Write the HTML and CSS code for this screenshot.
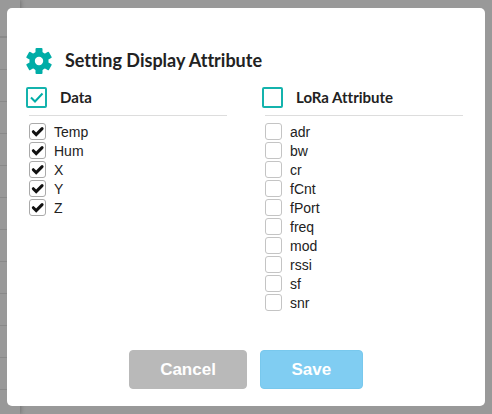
FILE: index.html
```
<!DOCTYPE html>
<html lang="en">
<head>
    <meta charset="UTF-8">
    <meta name="viewport" content="width=device-width, initial-scale=1.0">
    <title>Setting Display Attribute</title>
    <link rel="stylesheet" href="styles.css">
</head>
<body>
    <!-- page behind the dialog -->
    <div class="page">
        <ul class="sidebar">
            <li class="sidebar-head"></li>
            <li></li>
            <li></li>
            <li></li>
            <li></li>
            <li></li>
            <li></li>
            <li></li>
            <li></li>
            <li></li>
            <li></li>
            <li></li>
        </ul>
    </div>

    <div class="overlay">
        <form class="modal" role="dialog" aria-labelledby="modal-title">
            <header class="modal-header">
                <svg class="gear" viewBox="0 0 26 26" aria-hidden="true">
                    <circle cx="13" cy="13" r="9.600"/>
                    <rect x="9.500" y="0" width="7" height="26" rx="1"/>
                    <rect x="9.500" y="0" width="7" height="26" rx="1" transform="rotate(60 13 13)"/>
                    <rect x="9.500" y="0" width="7" height="26" rx="1" transform="rotate(120 13 13)"/>
                    <circle class="gear-hole" cx="13" cy="13" r="4.200"/>
                </svg>
                <h1 id="modal-title">Setting Display Attribute</h1>
            </header>

            <div class="columns">
                <section class="group">
                    <div class="group-head">
                        <input type="checkbox" class="check-all" id="all-data" checked>
                        <label for="all-data">Data</label>
                    </div>
                    <ul class="attributes">
                        <li><input type="checkbox" id="temp" checked><label for="temp">Temp</label></li>
                        <li><input type="checkbox" id="hum" checked><label for="hum">Hum</label></li>
                        <li><input type="checkbox" id="x" checked><label for="x">X</label></li>
                        <li><input type="checkbox" id="y" checked><label for="y">Y</label></li>
                        <li><input type="checkbox" id="z" checked><label for="z">Z</label></li>
                    </ul>
                </section>

                <section class="group">
                    <div class="group-head">
                        <input type="checkbox" class="check-all" id="all-lora">
                        <label for="all-lora">LoRa Attribute</label>
                    </div>
                    <ul class="attributes">
                        <li><input type="checkbox" id="adr"><label for="adr">adr</label></li>
                        <li><input type="checkbox" id="bw"><label for="bw">bw</label></li>
                        <li><input type="checkbox" id="cr"><label for="cr">cr</label></li>
                        <li><input type="checkbox" id="fcnt"><label for="fcnt">fCnt</label></li>
                        <li><input type="checkbox" id="fport"><label for="fport">fPort</label></li>
                        <li><input type="checkbox" id="freq"><label for="freq">freq</label></li>
                        <li><input type="checkbox" id="mod"><label for="mod">mod</label></li>
                        <li><input type="checkbox" id="rssi"><label for="rssi">rssi</label></li>
                        <li><input type="checkbox" id="sf"><label for="sf">sf</label></li>
                        <li><input type="checkbox" id="snr"><label for="snr">snr</label></li>
                    </ul>
                </section>
            </div>

            <footer class="modal-footer">
                <button type="button" class="btn btn-cancel">Cancel</button>
                <button type="button" class="btn btn-save">Save</button>
            </footer>
        </form>
    </div>
</body>
</html>
```
FILE: styles.css
```
* {
    margin: 0;
    padding: 0;
    box-sizing: border-box;
}

body {
    background-color: #999;
    color: #222;
    font-family: "Liberation Sans", Arial, sans-serif;
    font-size: 14px;
}

ul {
    list-style: none;
}

.page {
    height: 100vh;
    overflow: hidden;
}

.sidebar {
    width: 20px;
    min-height: 100%;
    box-shadow: 1px 0 4px rgba(0, 0, 0, 0.25);
}

.sidebar li {
    height: 32px;
    border-bottom: 1px solid #8a8a8a;
}

.sidebar .sidebar-head {
    height: 38px;
    border-bottom-width: 2px;
}

.overlay {
    position: absolute;
    top: 0;
    left: 0;
    width: 100%;
    padding: 8px 7px;
}

.modal {
    padding: 40px 22px 17px;
    background-color: #fff;
    border-radius: 5px;
}

.modal-header {
    display: flex;
    align-items: center;
    gap: 13px;
    height: 26px;
    margin-left: -3px;
}

.gear {
    width: 26px;
    height: 26px;
    fill: #00ada7;
}

.gear-hole {
    fill: #fff;
}

h1 {
    padding-bottom: 2px;
    font-family: Lato, sans-serif;
    font-size: 18px;
    line-height: 24px;
    font-weight: 700;
    font-variant-ligatures: none;
}

.columns {
    display: grid;
    grid-template-columns: 1fr 1fr;
    gap: 38px;
    margin-top: 9px;
}

.group-head {
    display: flex;
    align-items: center;
    gap: 13px;
    height: 33px;
    padding-bottom: 4px;
    border-bottom: 1px solid #ddd;
    font-family: Lato, sans-serif;
    font-size: 15px;
    font-weight: 700;
    font-variant-ligatures: none;
}

input[type="checkbox"] {
    appearance: none;
    flex: none;
    width: 17px;
    height: 17px;
    border: 1px solid #c4c4c4;
    border-radius: 3px;
    background: #fff center no-repeat;
}

input[type="checkbox"]:checked {
    border-color: #aaa;
    background-image: url("data:image/svg+xml,%3Csvg xmlns='http://www.w3.org/2000/svg' width='15' height='15'%3E%3Cpath d='M3.300 7.700l2.900 2.900 5.900-6' fill='none' stroke='%23111' stroke-width='3' stroke-linecap='round'/%3E%3C/svg%3E");
}

input[type="checkbox"].check-all {
    width: 21px;
    height: 21px;
    margin-left: -3px;
    border: 2px solid #14b3ad;
    border-radius: 2px;
}

input[type="checkbox"].check-all:checked {
    background-image: url("data:image/svg+xml,%3Csvg xmlns='http://www.w3.org/2000/svg' width='17' height='17'%3E%3Cpath d='M3 8.500l4 4 7.500-8' fill='none' stroke='%2300ada7' stroke-width='2'/%3E%3C/svg%3E");
}

.attributes {
    padding-top: 6px;
}

.attributes li {
    display: flex;
    align-items: center;
    gap: 8px;
    height: 19px;
}

.modal-footer {
    display: flex;
    justify-content: center;
    gap: 13px;
    margin-top: 38px;
}

.btn {
    min-width: 103px;
    height: 39px;
    padding: 0 30px;
    border: 1px solid #b9b9b9;
    border-radius: 4px;
    color: #fff;
    font-family: "Liberation Sans", Arial, sans-serif;
    font-size: 17px;
    font-weight: 700;
    cursor: pointer;
}

.btn-cancel {
    background-color: #b9b9b9;
}

.btn-save {
    border-color: #78c8ed;
    background-color: #80cdf2;
}
```
